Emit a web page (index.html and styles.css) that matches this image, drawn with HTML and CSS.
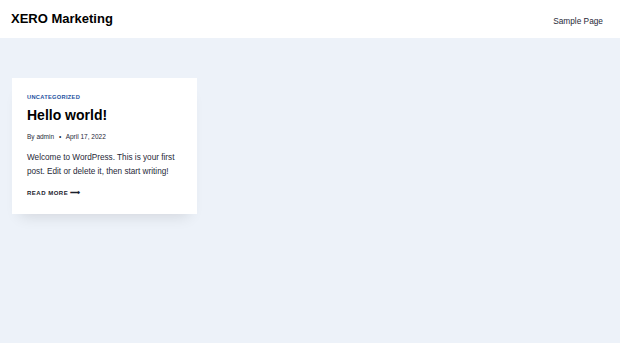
FILE: index.html
```html
<!DOCTYPE html>
<html>
  <head>
    <meta charset="utf-8">
    <title>XERO Marketing</title>
    <link rel="stylesheet" href="styles.css">
  </head>
  <body>

    <header class="site-header">
      <a class="brand" href="#">XERO Marketing</a>
      <nav class="menu">
        <a href="#">Sample Page</a>
      </nav>
    </header>

    <main class="content">
      <article class="post-card">
        <a class="category" href="#">Uncategorized</a>
        <h2 class="post-title">Hello world!</h2>
        <p class="meta">By admin <span class="dot">•</span> April 17, 2022</p>
        <p class="excerpt">Welcome to WordPress. This is your first post. Edit or delete it, then start writing!</p>
        <a class="more" href="#">Read More <span class="arrow">⟶</span></a>
      </article>
    </main>

  </body>
</html>
```

FILE: styles.css
```css
/* General styles */

html {
  height: 100%;
  font-family: "Liberation Sans", Arial, sans-serif;
}

body {
  margin: 0;
  min-height: 100%;
  background-color: #edf2f9;
  color: #2d3748;
}

* {
  box-sizing: border-box;
}

a {
  text-decoration: none;
}

/* Header */

.site-header {
  height: 38px;
  background-color: #fff;
  display: flex;
  align-items: center;
  justify-content: space-between;
  padding: 0 17px 1px 11px;
}

.brand {
  font-size: 13px;
  font-weight: bold;
  color: #000;
}

.menu a {
  font-size: 8.3px;
  color: #1f2937;
}

/* Posts */

.content {
  padding: 40px 12px;
}

.post-card {
  width: 185px;
  background-color: #fff;
  padding: 15px 15px 15px 15px;
  box-shadow: 0 10px 14px -8px rgba(0, 0, 0, 0.12);
}

.category {
  display: block;
  font-size: 5.7px;
  font-weight: bold;
  text-transform: uppercase;
  letter-spacing: 0.3px;
  color: #2250a0;
  line-height: 8px;
}

.post-title {
  margin: 4px 0 0;
  font-size: 14px;
  line-height: 20px;
  color: #000;
}

.meta {
  margin: 7px 0 0;
  font-size: 6.5px;
  line-height: 10px;
  color: #1f2937;
}

.dot {
  margin: 0 3px;
}

.excerpt {
  margin: 9px 0 0;
  font-size: 8.2px;
  line-height: 14px;
  color: #1f2937;
}

.more {
  display: block;
  margin-top: 8px;
  font-size: 6px;
  line-height: 12px;
  font-weight: bold;
  text-transform: uppercase;
  letter-spacing: 0.5px;
  color: #1a202c;
}

.arrow {
  font-size: 7px;
}
```
